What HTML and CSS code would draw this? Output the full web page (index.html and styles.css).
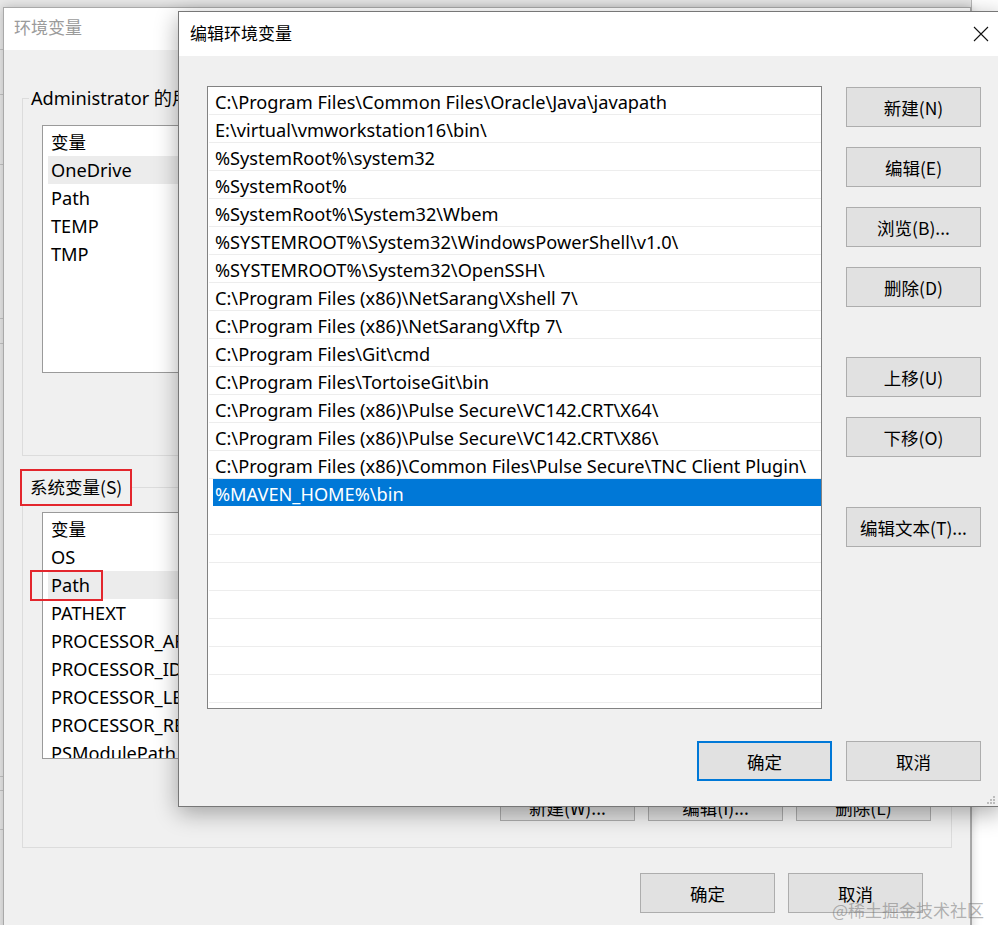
FILE: index.html
```html
<!DOCTYPE html>
<html lang="zh-CN">
<head>
<meta charset="utf-8">
<title>编辑环境变量</title>
<link rel="stylesheet" href="styles.css">
</head>
<body>
<div class="under">
  <div class="under-line l1"></div>
  <div class="under-line l2"></div>
  <div class="under-line l3"></div>
  <div class="under-line l4"></div>
  <div class="under-line l5"></div>
  <div class="under-line l6"></div>
  <div class="under-line l7"></div>
  <div class="under-line l8"></div>
</div>

<div class="win-back">
  <div class="titlebar back-title">环境变量</div>
  <div class="back-body">
    <fieldset class="group group-user">
      <legend class="legend-user">Administrator 的用户变量(U)</legend>
      <div class="list-wrap wrap-user">
        <div class="vlist vlist-user">
          <div class="vrow head">变量</div>
          <div class="vrow hl">OneDrive</div>
          <div class="vrow">Path</div>
          <div class="vrow">TEMP</div>
          <div class="vrow">TMP</div>
        </div>
      </div>
    </fieldset>
    <fieldset class="group group-sys">
      <legend class="legend-sys">系统变量(S)</legend>
      <div class="list-wrap wrap-sys">
        <div class="vlist vlist-sys">
          <div class="vrow head">变量</div>
          <div class="vrow">OS</div>
          <div class="vrow hl">Path</div>
          <div class="vrow">PATHEXT</div>
          <div class="vrow">PROCESSOR_ARCHITECTURE</div>
          <div class="vrow">PROCESSOR_IDENTIFIER</div>
          <div class="vrow">PROCESSOR_LEVEL</div>
          <div class="vrow">PROCESSOR_REVISION</div>
          <div class="vrow">PSModulePath</div>
        </div>
        <span class="mark"></span>
      </div>
      <div class="back-actions">
        <div class="btn small">新建(W)...</div>
        <div class="btn small">编辑(I)...</div>
        <div class="btn small">删除(L)</div>
      </div>
    </fieldset>
    <div class="back-footer">
      <div class="btn">确定</div>
      <div class="btn">取消</div>
    </div>
  </div>
</div>

<div class="win-front">
  <div class="titlebar front-title">
    <span>编辑环境变量</span>
    <svg class="close" width="16" height="16" viewBox="0 0 16 16"><path d="M1 1 L15 15 M15 1 L1 15" stroke="#111" stroke-width="1.1" fill="none"/></svg>
  </div>
  <div class="front-body">
    <div class="front-main">
      <div class="plist">
        <div class="prow">C:\Program Files\Common Files\Oracle\Java\javapath</div>
        <div class="prow">E:\virtual\vmworkstation16\bin\</div>
        <div class="prow">%SystemRoot%\system32</div>
        <div class="prow">%SystemRoot%</div>
        <div class="prow">%SystemRoot%\System32\Wbem</div>
        <div class="prow">%SYSTEMROOT%\System32\WindowsPowerShell\v1.0\</div>
        <div class="prow">%SYSTEMROOT%\System32\OpenSSH\</div>
        <div class="prow">C:\Program Files (x86)\NetSarang\Xshell 7\</div>
        <div class="prow">C:\Program Files (x86)\NetSarang\Xftp 7\</div>
        <div class="prow">C:\Program Files\Git\cmd</div>
        <div class="prow">C:\Program Files\TortoiseGit\bin</div>
        <div class="prow">C:\Program Files (x86)\Pulse Secure\VC142.CRT\X64\</div>
        <div class="prow">C:\Program Files (x86)\Pulse Secure\VC142.CRT\X86\</div>
        <div class="prow">C:\Program Files (x86)\Common Files\Pulse Secure\TNC Client Plugin\</div>
        <div class="prow sel"><span>%MAVEN_HOME%\bin</span></div>
        <div class="prow"></div>
        <div class="prow"></div>
        <div class="prow"></div>
        <div class="prow"></div>
        <div class="prow"></div>
        <div class="prow"></div>
        <div class="prow"></div>
        <div class="prow"></div>
      </div>
      <div class="side">
        <div class="btn">新建(N)</div>
        <div class="btn gap1">编辑(E)</div>
        <div class="btn gap1">浏览(B)...</div>
        <div class="btn gap1">删除(D)</div>
        <div class="btn gap2">上移(U)</div>
        <div class="btn gap1">下移(O)</div>
        <div class="btn gap2">编辑文本(T)...</div>
      </div>
    </div>
    <div class="front-footer">
      <div class="btn default">确定</div>
      <div class="btn">取消</div>
    </div>
    <svg class="grip" width="10" height="10" viewBox="0 0 10 10">
      <rect x="7" y="1" width="2" height="2" fill="#bdbdbd"/>
      <rect x="4" y="4" width="2" height="2" fill="#bdbdbd"/>
      <rect x="7" y="4" width="2" height="2" fill="#bdbdbd"/>
      <rect x="1" y="7" width="2" height="2" fill="#bdbdbd"/>
      <rect x="4" y="7" width="2" height="2" fill="#bdbdbd"/>
      <rect x="7" y="7" width="2" height="2" fill="#bdbdbd"/>
    </svg>
  </div>
</div>

<div class="watermark">@稀土掘金技术社区</div>
</body>
</html>
```

FILE: styles.css
```css
* { box-sizing: border-box; }

html, body {
  margin: 0;
  padding: 0;
}

body {
  width: 998px;
  height: 925px;
  overflow: hidden;
  position: relative;
  background: #ffffff;
  font-family: "Segoe UI", "Noto Sans", "Noto Sans CJK SC", sans-serif;
  font-size: 18.2px;
  color: #000;
}

/* underlying window */
.under {
  position: absolute;
  left: -20px;
  top: -20px;
  width: 992px;
  height: 1000px;
  background: #e9e9e9;
  border: 1px solid #b9b9b9;
}
.under-line {
  position: absolute;
  left: 0;
  width: 30px;
  height: 1px;
  background: #c4c4c4;
}
.l1 { top: 68px; }
.l2 { top: 113px; }
.l3 { top: 183px; }
.l4 { top: 337px; }
.l5 { top: 362px; }
.l6 { top: 795px; }
.l7 { top: 809px; }
.l8 { top: 848px; }

/* back window */
.win-back {
  position: absolute;
  left: 3px;
  top: 7px;
  width: 968px;
  height: 940px;
  background: #f0f0f0;
  border: 1px solid #a9a9a9;
  box-shadow: 0 0 10px rgba(0, 0, 0, 0.22);
}

.titlebar {
  background: #ffffff;
  font-family: "Noto Sans CJK SC", sans-serif;
  font-size: 17px;
}

.back-title {
  height: 42px;
  line-height: 38px;
  padding-left: 10px;
  color: #9b9b9b;
}

.back-body {
  padding: 36px 18px 0 18px;
}

.group {
  margin: 0;
  padding: 0;
  border: 1px solid #dcdcdc;
  min-width: 0;
}

.group-user {
  height: 370px;
}

.legend-user {
  margin-left: 6px;
  padding: 0 2px;
  line-height: 24px;
}

.group-sys {
  margin-top: 13px;
  height: 379px;
}

.legend-sys {
  margin-left: -3px;
  padding: 0 8px;
  border: 2px solid #e3262d;
  height: 37px;
  line-height: 31px;
  font-family: "Noto Sans CJK SC", sans-serif;
  font-size: 17.5px;
}

.list-wrap {
  position: relative;
  margin-left: 19px;
  width: 460px;
}

.wrap-user { margin-top: 15px; }
.wrap-sys { margin-top: 6px; }

.vlist {
  background: #fff;
  border: 1px solid #9a9a9a;
  padding: 2px 0 0 5px;
  overflow: hidden;
}

.vlist-user { height: 248px; }
.vlist-sys { height: 247px; }

.vrow {
  height: 28px;
  line-height: 28px;
  padding-left: 3px;
  white-space: nowrap;
}

.vrow.head {
  font-family: "Noto Sans CJK SC", sans-serif;
  font-size: 17.5px;
}

.vrow.hl {
  background: #ececec;
}

.mark {
  position: absolute;
  left: -12px;
  top: 58px;
  width: 73px;
  height: 31px;
  border: 2px solid #e3262d;
}

.back-actions {
  display: flex;
  justify-content: flex-end;
  gap: 13px;
  margin-top: 34px;
  padding-right: 20px;
}

.btn {
  width: 135px;
  height: 40px;
  background: #e1e1e1;
  border: 1px solid #adadad;
  display: flex;
  align-items: center;
  justify-content: center;
  font-family: "Noto Sans CJK SC", sans-serif;
  font-size: 17.5px;
  white-space: nowrap;
}

.btn.small {
  height: 28px;
}

.back-footer {
  display: flex;
  justify-content: flex-end;
  gap: 13px;
  margin-top: 25px;
  padding-right: 29px;
}

/* front dialog */
.win-front {
  position: absolute;
  left: 178px;
  top: 11px;
  width: 824px;
  height: 796px;
  border: 1px solid #777777;
  background: #f0f0f0;
  box-shadow: 0 6px 22px rgba(0, 0, 0, 0.33);
}

.front-title {
  height: 44px;
  display: flex;
  align-items: center;
  padding-left: 11px;
  padding-bottom: 4px;
  position: relative;
}

.close {
  position: absolute;
  left: 794px;
  top: 14px;
}

.front-body {
  position: relative;
  height: 750px;
  padding: 30px 0 0 28px;
}

.front-main {
  display: flex;
  gap: 24px;
}

.plist {
  width: 615px;
  height: 623px;
  background: #fff;
  border: 1px solid #828282;
  overflow: hidden;
  padding-left: 1px;
}

.prow {
  height: 28px;
  padding-top: 3px;
  line-height: 24px;
  border-bottom: 1px solid #ededed;
  padding-left: 6px;
  white-space: nowrap;
}

.prow.sel {
  padding-top: 0;
  padding-left: 4px;
  border-bottom-color: #ffffff;
}

.prow.sel span {
  display: block;
  height: 27px;
  padding-top: 3px;
  line-height: 24px;
  background: #0078d7;
  color: #fff;
  padding-left: 2px;
}

.side {
  display: flex;
  flex-direction: column;
  padding-top: 1px;
}

.side .gap1 { margin-top: 20px; }
.side .gap2 { margin-top: 50px; }

.front-footer {
  display: flex;
  gap: 14px;
  margin-top: 32px;
  padding-left: 490px;
}

.btn.default {
  border: 2px solid #0078d7;
}

.grip {
  position: absolute;
  left: 807px;
  bottom: 1px;
}

.watermark {
  position: absolute;
  left: 832px;
  top: 897px;
  font-family: "Noto Sans CJK SC", sans-serif;
  font-size: 17px;
  color: rgba(120, 120, 120, 0.55);
  white-space: nowrap;
}
```
